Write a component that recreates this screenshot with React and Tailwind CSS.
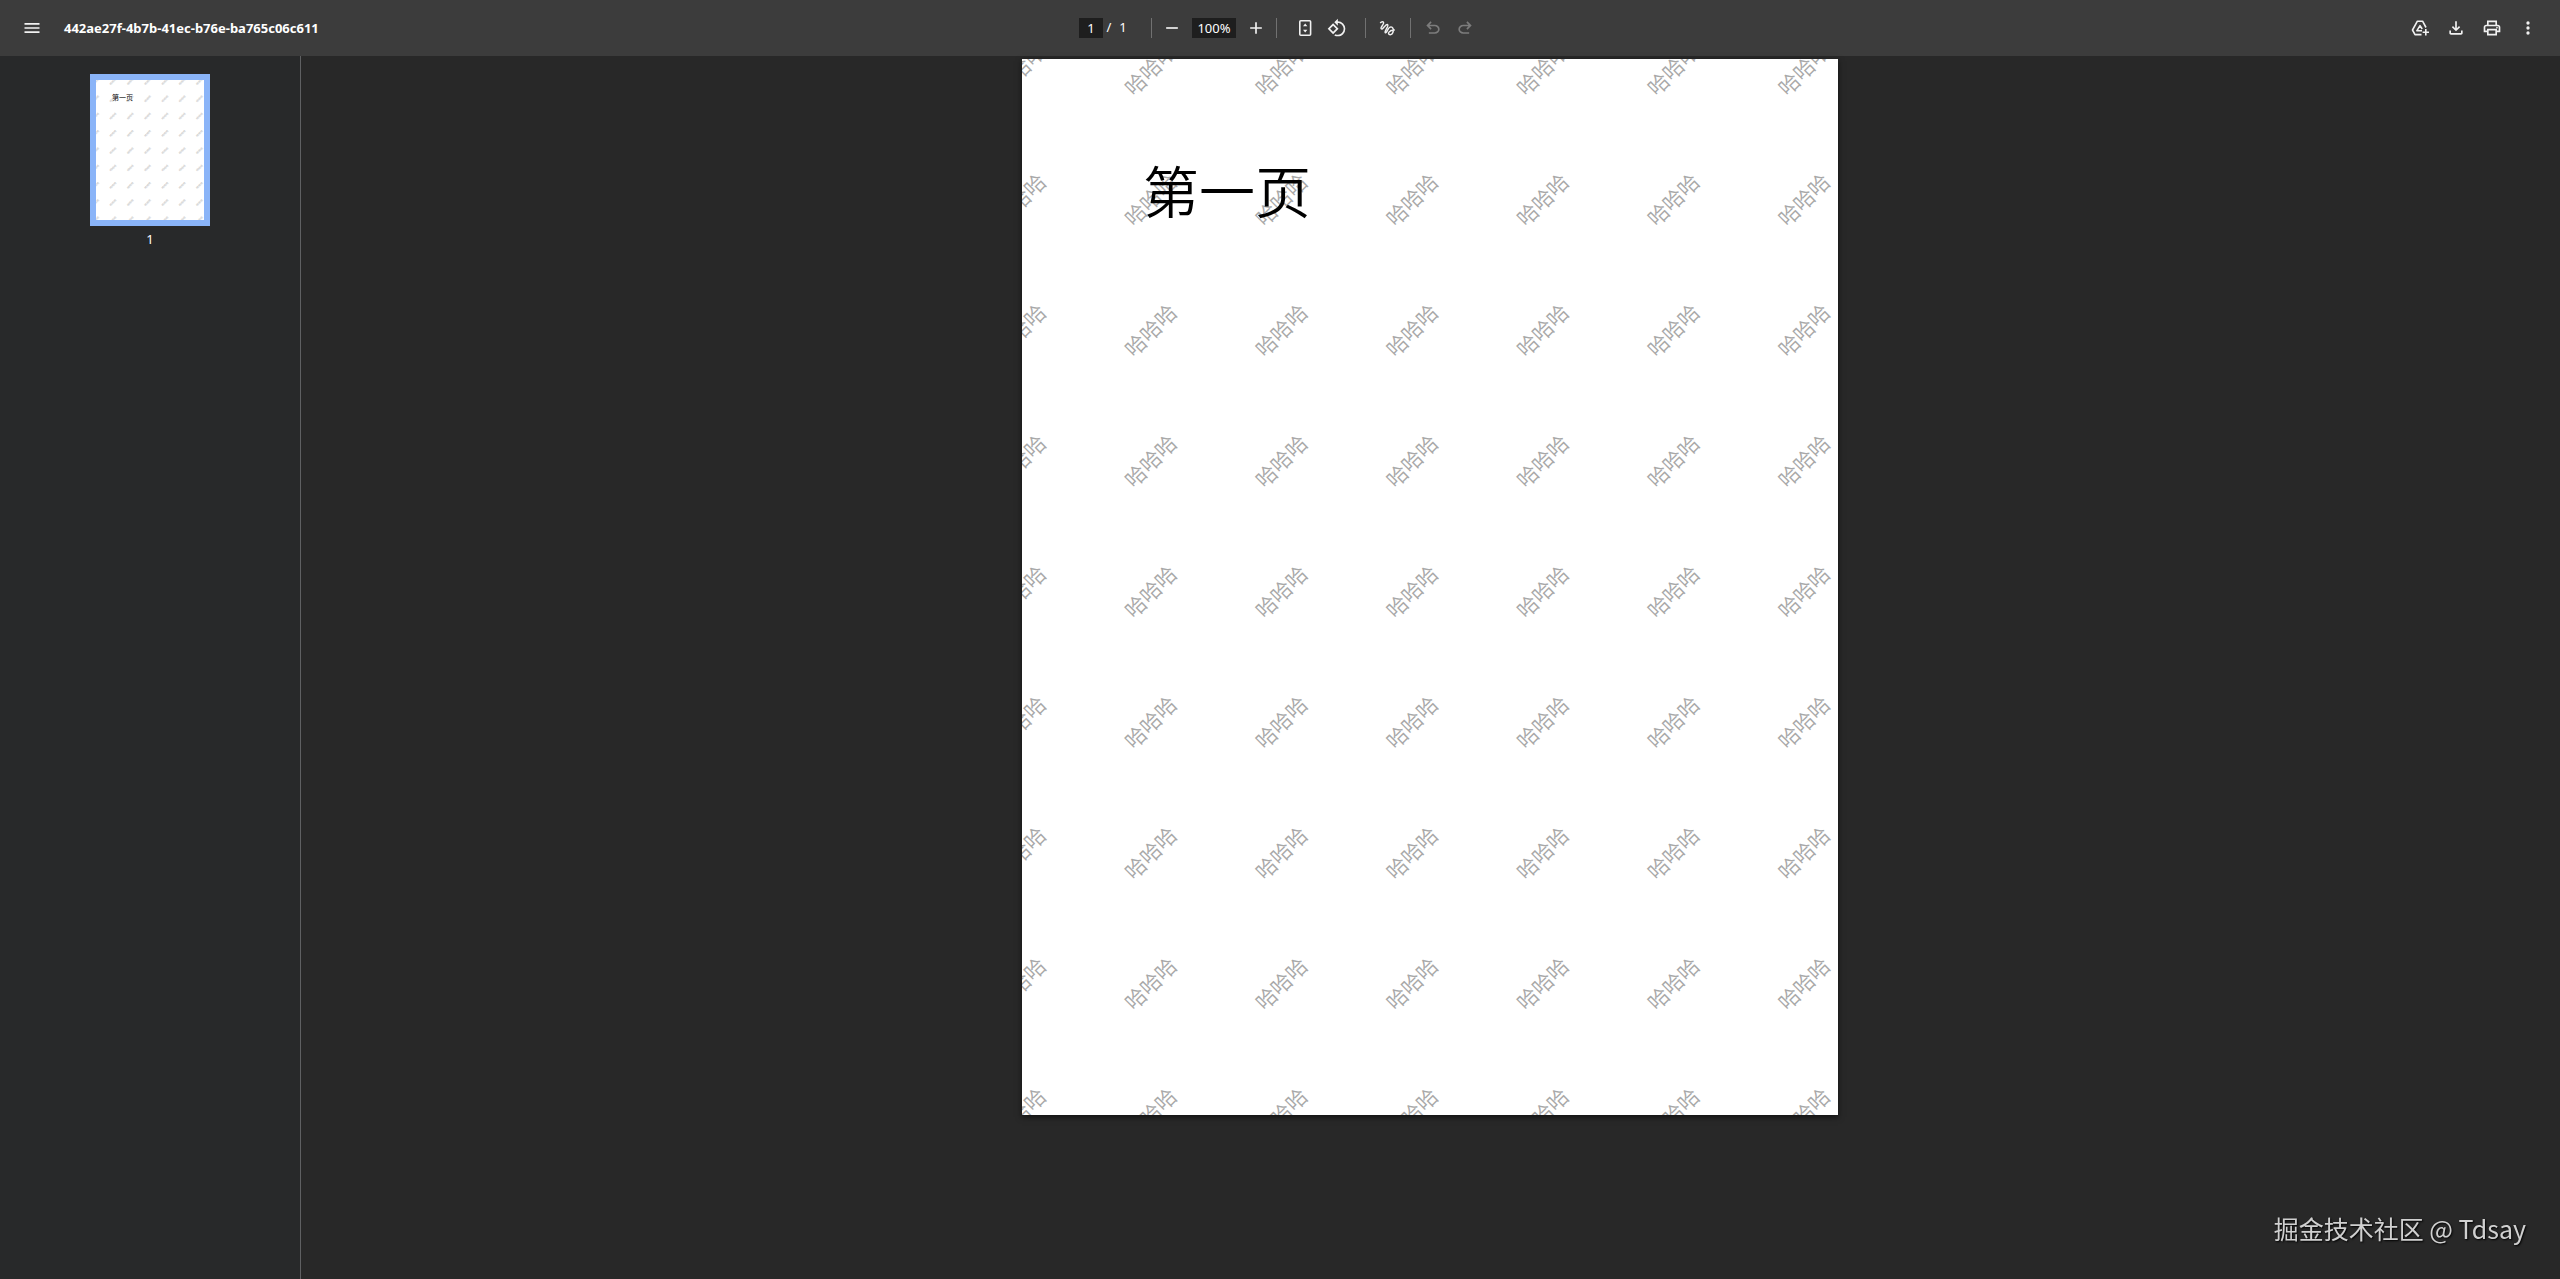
import React, { useState } from 'react';

const ICONS = {
  menu: 'M3 18h18v-2H3v2zm0-5h18v-2H3v2zm0-7v2h18V6H3z',
  remove: 'M5 11h14v2H5z',
  add: 'M11 19v-6H5v-2h6V5h2v6h6v2h-6v6z',
  rotate:
    'M7.34 6.41.86 12.9l6.49 6.48 6.49-6.48-6.5-6.49zM3.69 12.9l3.66-3.66L11 12.9l-3.66 3.66-3.65-3.66zm15.67-6.26A8.95 8.95 0 0 0 13 4V.76L8.76 5 13 9.24V6c1.79 0 3.58.68 4.95 2.05a7.007 7.007 0 0 1 0 9.9 6.973 6.973 0 0 1-7.79 1.44l-1.49 1.49C10.02 21.62 11.51 22 13 22c2.3 0 4.61-.88 6.36-2.64a8.98 8.98 0 0 0 0-12.72z',
  undo: 'M7 19v-2h7.1q1.575 0 2.737-1T18 13.5 16.838 11 14.1 10H7.8l2.6 2.6L9 14 4 9l5-5 1.4 1.4L7.8 8h6.3q2.425 0 4.163 1.575T20 13.5t-1.737 3.925T14.1 19z',
  redo: 'M17 19v-2H9.9q-1.575 0-2.737-1T6 13.5 7.163 11 9.9 10h6.3l-2.6 2.6L15 14l5-5-5-5-1.4 1.4L16.2 8H9.9Q7.475 8 5.737 9.575T4 13.5t1.737 3.925T9.9 19z',
  download:
    'M12 16l-5-5 1.4-1.45 2.6 2.6V4h2v8.15l2.6-2.6L17 11zM6 20q-.825 0-1.412-.587T4 18v-3h2v3h12v-3h2v3q0 .825-.587 1.413T18 20z',
  print:
    'M16 8V5H8v3H6V3h12v5zM18 12.5q.425 0 .713-.288T19 11.5t-.288-.712T18 10.5t-.712.288T17 11.5t.288.713.712.287M16 19v-4H8v4zm2 2H6v-4H2v-6q0-1.275.875-2.137T5 8h14q1.275 0 2.138.863T22 11v6h-4zm2-6v-4q0-.425-.288-.712T19 10H5q-.425 0-.712.288T4 11v4h2v-2h12v2z',
  more: 'M12 8a2 2 0 1 0 0-4 2 2 0 0 0 0 4zm0 2a2 2 0 1 0 0 4 2 2 0 0 0 0-4zm0 6a2 2 0 1 0 0 4 2 2 0 0 0 0-4z',
};

function Icon({ name }) {
  return (
    <svg className="size-5" viewBox="0 0 24 24" fill="currentColor" aria-hidden="true">
      <path d={ICONS[name]} />
    </svg>
  );
}

function FitIcon() {
  return (
    <svg className="size-5" viewBox="0 0 20 20" fill="none" aria-hidden="true">
      <rect x="4.8" y="2.8" width="10.8" height="14.4" rx="1" stroke="currentColor" strokeWidth="1.6" />
      <path d="M10.2 5.5 12.4 8.2H8zM10.2 14.5l2.2-2.7H8z" fill="currentColor" />
    </svg>
  );
}

function DrawIcon() {
  return (
    <svg className="size-5" viewBox="0 0 20 20" fill="none" stroke="currentColor" strokeWidth="1.4" aria-hidden="true">
      <path d="M4.2 5C5.4 3.7 7.8 3 7.6 5.2 7.2 7.4 4 9.6 5.2 10.8 6.8 12.2 9.8 5.6 11.6 6.6 13.4 7.8 8 13 9.2 14.6 11 16 11.6 8.8 15 8.9 18.8 9.4 17.6 16.6 14.2 16.7 10.6 16.4 13 11.8 18.8 12" />
    </svg>
  );
}

function DriveIcon() {
  return (
    <svg className="size-5" viewBox="0 0 20 20" fill="none" stroke="currentColor" strokeWidth="1.6" strokeLinejoin="round" aria-hidden="true">
      <path d="M11.5 16.6H5L2.5 12 7.4 3.2h5.2l3.4 6.3" />
      <path d="M12 12.8H6.8L10 7.6l2.2 3.4" />
      <path d="M15.8 11v6.4M12.6 14.2H19" />
    </svg>
  );
}

function IconButton({ label, disabled, children }) {
  return (
    <button
      type="button"
      aria-label={label}
      disabled={disabled}
      className="flex size-8 items-center justify-center rounded-full text-[#f1f1f1] hover:bg-white/10 disabled:text-[#7c7c7c]"
    >
      {children}
    </button>
  );
}

function Divider({ className }) {
  return <span className={`h-5 w-px bg-[#717171] ${className}`} />;
}

function Toolbar() {
  const [page, setPage] = useState('1');
  const [zoom, setZoom] = useState('100%');

  return (
    <header className="flex h-14 items-center bg-[#3c3c3c] px-4 text-[13px] text-white">
      <div className="flex flex-1 items-center gap-4">
        <IconButton label="Menu"><Icon name="menu" /></IconButton>
        <h1 className="pt-px text-[13px] font-bold">442ae27f-4b7b-41ec-b76e-ba765c06c611</h1>
      </div>

      <div className="flex items-center">
        <input
          aria-label="Page number"
          className="h-5 w-6 bg-[#1e1e1e] text-center outline-none"
          value={page}
          onChange={(e) => setPage(e.target.value)}
        />
        <span className="w-3 text-center">/</span>
        <span className="w-4 text-center">1</span>
        <Divider className="ml-5 mr-1" />
        <IconButton label="Zoom out"><Icon name="remove" /></IconButton>
        <input
          aria-label="Zoom level"
          className="mx-1 h-5 w-11 bg-[#1e1e1e] text-center outline-none"
          value={zoom}
          onChange={(e) => setZoom(e.target.value)}
        />
        <IconButton label="Zoom in"><Icon name="add" /></IconButton>
        <Divider className="ml-1 mr-3" />
        <IconButton label="Fit to page"><FitIcon /></IconButton>
        <IconButton label="Rotate counterclockwise"><Icon name="rotate" /></IconButton>
        <Divider className="ml-3 mr-1" />
        <IconButton label="Draw"><DrawIcon /></IconButton>
        <Divider className="ml-2 mr-[6px]" />
        <IconButton label="Undo" disabled><Icon name="undo" /></IconButton>
        <IconButton label="Redo" disabled><Icon name="redo" /></IconButton>
      </div>

      <div className="flex flex-1 items-center justify-end gap-1">
        <IconButton label="Save to Drive"><DriveIcon /></IconButton>
        <IconButton label="Download"><Icon name="download" /></IconButton>
        <IconButton label="Print"><Icon name="print" /></IconButton>
        <IconButton label="More actions"><Icon name="more" /></IconButton>
      </div>
    </header>
  );
}

// repeated 45 degree stamp, 98pt apart on a Letter sheet
const STEP = 392 / 3;
const ROWS = [0, 1, 2, 3, 4, 5, 6, 7, 8];
const COLS = [0, 1, 2, 3, 4, 5, 6];

function Watermark() {
  return (
    <svg className="absolute inset-0 size-full" viewBox="0 0 816 1056" aria-hidden="true">
      {ROWS.map((r) =>
        COLS.map((c) => (
          <text
            key={`${r}-${c}`}
            transform={`translate(${c * STEP - 2} ${r * STEP + 10}) rotate(-45)`}
            textAnchor="middle"
            y="8"
            fontSize="21"
            className="fill-[#a8a8a8] font-[350]"
          >
            哈哈哈
          </text>
        ))
      )}
    </svg>
  );
}

function Sidebar() {
  return (
    <aside className="flex w-[301px] shrink-0 flex-col items-center border-r border-[#5f6062] bg-[#28292a] pt-[18px]">
      <a href="#page-1" className="flex flex-col items-center gap-[3px] text-white">
        <span className="relative block h-[152px] w-[120px] border-[6px] border-[#8ab4f8] bg-white pt-[14px] pl-4 text-[7px] leading-[8px] text-black">
          <Watermark />
          第一页
        </span>
        <span className="text-[13px] leading-5">1</span>
      </a>
    </aside>
  );
}

export default function App() {
  return (
    <div className="flex min-h-screen flex-col bg-[#282828] font-['Noto_Sans','Noto_Sans_CJK_SC',sans-serif]">
      <Toolbar />
      <div className="flex flex-1">
        <Sidebar />
        <main className="flex flex-1 items-start justify-center pt-[3px] pr-px">
          <article
            id="page-1"
            className="relative h-[1056px] w-[816px] bg-white pt-[104px] pl-[121px] shadow-[0_2px_6px_rgba(0,0,0,0.6)]"
          >
            <Watermark />
            <h2 className="relative text-[56px] leading-[56px] font-[350] text-black">第一页</h2>
          </article>
        </main>
      </div>
      <p className="fixed right-[34px] bottom-[30px] text-[25px] leading-[42px] text-[#d0d0d0] [text-shadow:1px_1px_2px_#000] font-['Noto_Sans_CJK_SC',sans-serif]">
        掘金技术社区 @ Tdsay
      </p>
    </div>
  );
}
